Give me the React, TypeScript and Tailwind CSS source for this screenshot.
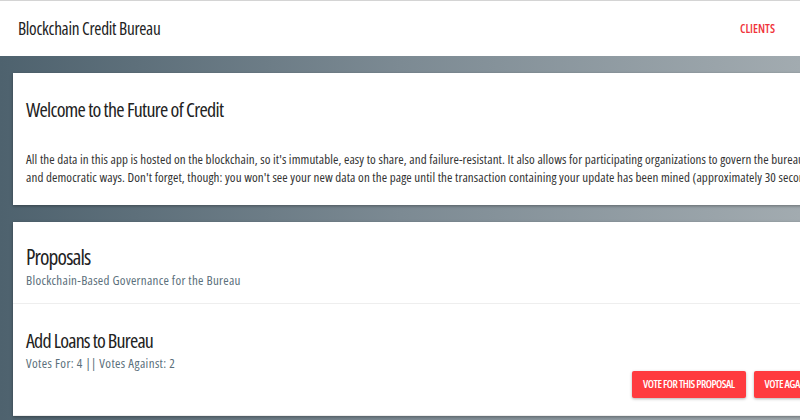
export default function App() {
  return (
    <div className="h-[420px] w-[800px] overflow-hidden bg-white font-['Open_Sans',sans-serif] [font-stretch:condensed]">
      <header className="flex h-[56px] items-center justify-between border-t border-[#d4d4d4] bg-white pl-[18px] pr-[25px] shadow-[0_1px_2px_rgba(0,0,0,0.3)]">
        <h1 className="text-[17.3px] tracking-[-0.3px] text-[#222]">Blockchain Credit Bureau</h1>
        <a className="text-[12px] font-semibold uppercase text-[#f0343c]">Clients</a>
      </header>
      <main className="h-[364px] bg-gradient-to-r from-[#4e626e] via-[#7c8a93] to-[#a2abb0] pl-[13px] pt-[17px]">
        <div className="w-[1000px]">
          <section className="h-[132px] bg-white px-[13px] pt-[24px] shadow-[0_1px_3px_rgba(0,0,0,0.35)]">
            <h2 className="text-[20px] leading-[26px] tracking-[-0.7px] text-[#222]">Welcome to the Future of Credit</h2>
            <p className="mt-[27px] text-[13px] leading-[18px] tracking-[0.1px] text-[#333] [font-stretch:84%]">
              All the data in this app is hosted on the blockchain, so it's immutable, easy to share, and failure-resistant. It also allows for participating organizations to govern the bureau in transparent
              <br />
              and democratic ways. Don't forget, though: you won't see your new data on the page until the transaction containing your update has been mined (approximately 30 seconds).
            </p>
          </section>
          <section className="mt-[17px] bg-white shadow-[0_1px_3px_rgba(0,0,0,0.35)]">
            <div className="border-b border-[#eeeeee] px-[13px] pb-[14px] pt-[21px]">
              <h2 className="text-[21.5px] leading-[28px] tracking-[-0.9px] text-[#222]">Proposals</h2>
              <p className="text-[13px] leading-[18px] tracking-[0.3px] text-[#5b6f7b] [font-stretch:84%]">Blockchain-Based Governance for the Bureau</p>
            </div>
            <div className="border-b border-[#eeeeee] px-[13px] pb-[17px] pt-[24px]">
              <h3 className="text-[20px] leading-[26px] tracking-[-0.8px] text-[#222]">Add Loans to Bureau</h3>
              <p className="text-[13px] leading-[18px] tracking-[0.37px] text-[#5b6f7b] [font-stretch:84%]">Votes For: 4 || Votes Against: 2</p>
              <div className="mt-[-1px] flex gap-[8px] pl-[606px]">
                <button className="h-[27px] whitespace-nowrap rounded-[2px] bg-[#ff3b3f] px-[11px] text-[11px] font-semibold uppercase tracking-[-0.5px] text-white shadow-[0_1px_3px_rgba(0,0,0,0.3)]">Vote for this proposal</button>
                <button className="h-[27px] whitespace-nowrap rounded-[2px] bg-[#ff3b3f] px-[11px] text-[11px] font-semibold uppercase tracking-[-0.5px] text-white shadow-[0_1px_3px_rgba(0,0,0,0.3)]">Vote against this proposal</button>
              </div>
            </div>
          </section>
        </div>
      </main>
    </div>
  );
}
